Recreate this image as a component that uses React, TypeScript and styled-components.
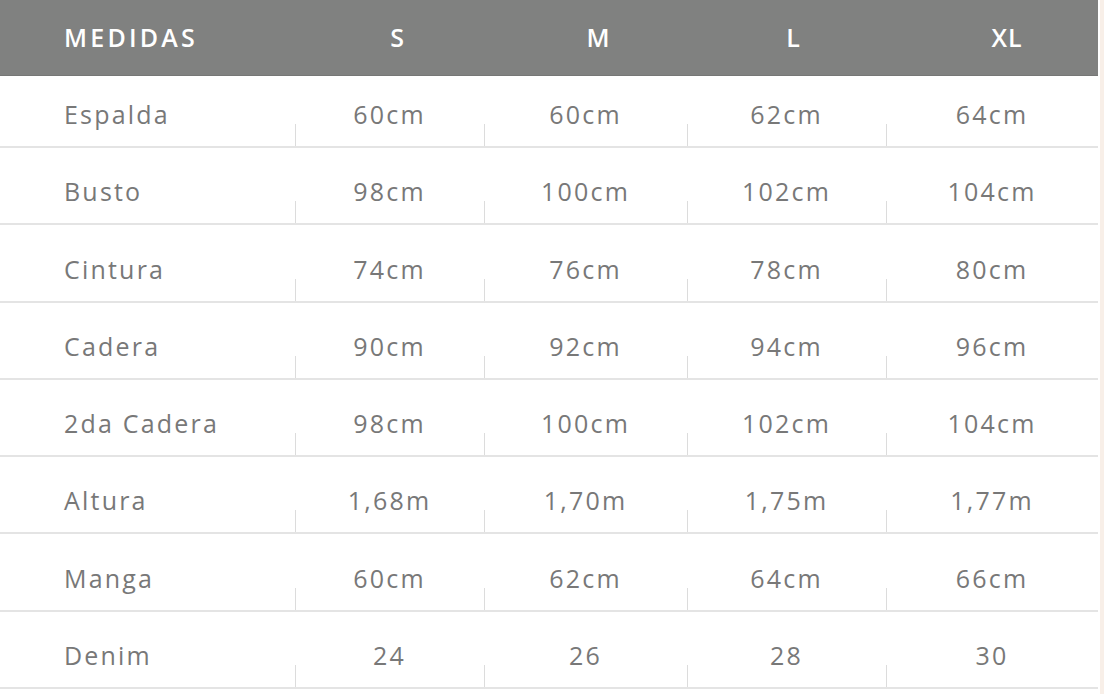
import React from "react";
import styled, { createGlobalStyle } from "styled-components";

const GlobalStyle = createGlobalStyle`
  html, body {
    margin: 0;
    padding: 0;
    background: #f8efe8;
  }
  body {
    font-family: "Open Sans", "Liberation Sans", sans-serif;
  }
`;

const Page = styled.div`
  width: 1100px;
  height: 694px;
  background: #ffffff;
  overflow: hidden;
`;

const Table = styled.div`
  width: 1098px;
  display: flex;
  flex-direction: column;
`;

const Columns = `
  display: grid;
  grid-template-columns: 295px 189px 203px 199px 212px;
`;

const HeaderRow = styled.div`
  ${Columns}
  height: 76px;
  background: #808180;
  border-bottom: 1px solid #767776;
  box-sizing: border-box;
  align-items: center;
`;

const HeaderCell = styled.div<{ $first?: boolean; $shift?: number }>`
  color: #ffffff;
  font-size: 25px;
  font-weight: 600;
  letter-spacing: ${(p) => (p.$first ? 3.2 : 1)}px;
  text-align: ${(p) => (p.$first ? "left" : "center")};
  padding-left: ${(p) => (p.$first ? 64 : p.$shift || 0)}px;
  line-height: 1;
`;

const Row = styled.div<{ $first?: boolean }>`
  ${Columns}
  height: ${(p) => (p.$first ? 72 : 77.3)}px;
  border-bottom: 2px solid #e4e4e4;
  box-sizing: border-box;
  align-items: end;
`;

const Cell = styled.div<{ $first?: boolean }>`
  position: relative;
  height: 100%;
  display: flex;
  align-items: flex-end;
  justify-content: ${(p) => (p.$first ? "flex-start" : "center")};
  padding-left: ${(p) => (p.$first ? 64 : 0)}px;
  padding-bottom: 19px;
  box-sizing: border-box;
  color: #787878;
  font-size: 25px;
  font-weight: 500;
  letter-spacing: 2.2px;
  line-height: 26px;
  ${(p) =>
    p.$first
      ? ""
      : `
    &::before {
      content: "";
      position: absolute;
      left: 0;
      bottom: 0;
      width: 1px;
      height: 22px;
      background: #dcdcdc;
    }
  `}
`;

const sizes = [
  { label: "S", shift: 16 },
  { label: "M", shift: 26 },
  { label: "L", shift: 14 },
  { label: "XL", shift: 30 },
];

const rows: [string, string[]][] = [
  ["Espalda", ["60cm", "60cm", "62cm", "64cm"]],
  ["Busto", ["98cm", "100cm", "102cm", "104cm"]],
  ["Cintura", ["74cm", "76cm", "78cm", "80cm"]],
  ["Cadera", ["90cm", "92cm", "94cm", "96cm"]],
  ["2da Cadera", ["98cm", "100cm", "102cm", "104cm"]],
  ["Altura", ["1,68m", "1,70m", "1,75m", "1,77m"]],
  ["Manga", ["60cm", "62cm", "64cm", "66cm"]],
  ["Denim", ["24", "26", "28", "30"]],
];

export default function App() {
  return (
    <>
      <GlobalStyle />
      <Page>
        <Table>
          <HeaderRow>
            <HeaderCell $first>MEDIDAS</HeaderCell>
            {sizes.map((s) => (
              <HeaderCell key={s.label} $shift={s.shift}>
                {s.label}
              </HeaderCell>
            ))}
          </HeaderRow>
          {rows.map(([name, vals], i) => (
            <Row key={name} $first={i === 0}>
              <Cell $first>{name}</Cell>
              {vals.map((v, j) => (
                <Cell key={j}>{v}</Cell>
              ))}
            </Row>
          ))}
        </Table>
      </Page>
    </>
  );
}
